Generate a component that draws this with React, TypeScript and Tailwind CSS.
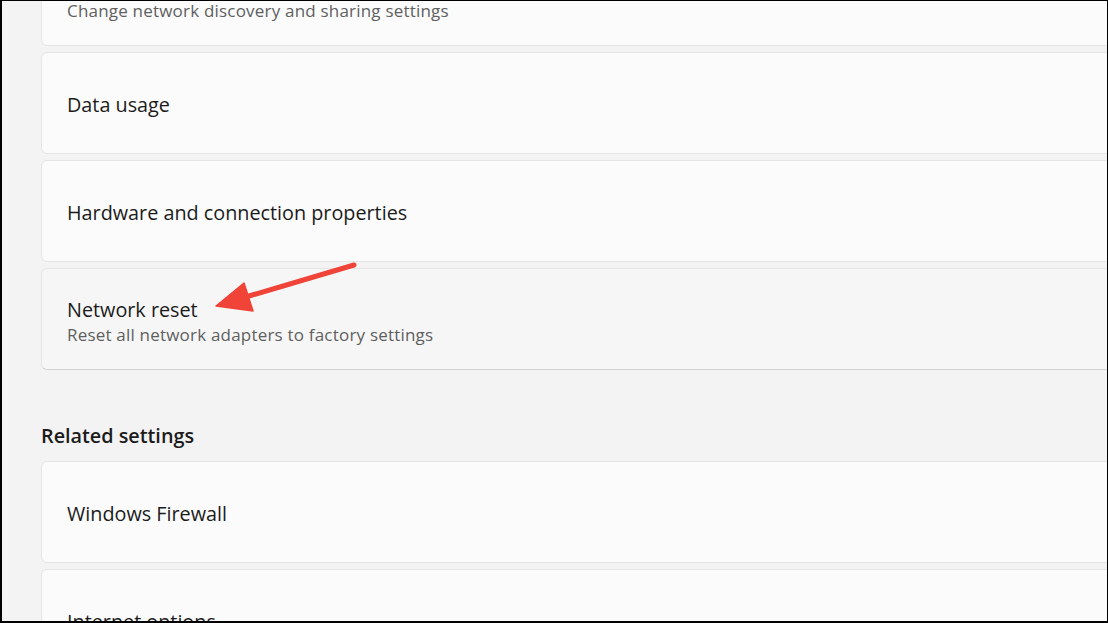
import React from "react";

type Row = { title: string; subtitle?: string; hover?: boolean };

const font = { fontFamily: '"Open Sans", "Noto Sans", sans-serif' };

function SettingCard({ title, subtitle, hover }: Row) {
  return (
    <div
      className={`flex h-[102px] shrink-0 flex-col justify-center rounded-[6px] border border-[#e5e5e5] pl-[25px] pt-[4px] -mr-[20px] ${
        hover ? "bg-[#f6f6f6] border-b-[#d3d3d3]" : "bg-[#fbfbfb]"
      }`}
    >
      <div className="text-[19.8px] leading-[26px] text-[#1b1b1b]">{title}</div>
      {subtitle && (
        <div className="text-[17px] leading-[23px] text-[#5f5f5f] tracking-[0.2px]">{subtitle}</div>
      )}
    </div>
  );
}

export default function App() {
  return (
    <div
      className="relative box-border h-[623px] w-[1108px] overflow-hidden border-b-2 border-l-2 border-r border-t border-black bg-[#f3f3f3]"
      style={font}
    >
      <div className="-mt-[57px] flex flex-col pl-[39px]">
        <div className="flex flex-col gap-[6px]">
          <SettingCard title="Advanced sharing settings" subtitle="Change network discovery and sharing settings" />
          <SettingCard title="Data usage" />
          <SettingCard title="Hardware and connection properties" />
          <SettingCard title="Network reset" subtitle="Reset all network adapters to factory settings" hover />
        </div>

        <h2 className="mt-[52px] mb-[11px] text-[19.8px] font-semibold leading-[28px] text-[#1b1b1b]">
          Related settings
        </h2>

        <div className="flex flex-col gap-[6px]">
          <SettingCard title="Windows Firewall" />
          <SettingCard title="Internet options" />
        </div>
      </div>

      <svg
        className="pointer-events-none absolute left-[198px] top-[254px]"
        width="170"
        height="65"
        viewBox="200 255 170 65"
      >
        <line x1="249" y1="296" x2="354" y2="265" stroke="#ef4437" strokeWidth="5" strokeLinecap="round" />
        <polygon points="216,306 244,283 253,311" fill="#ef4437" stroke="#ef4437" strokeWidth="1.5" strokeLinejoin="round" />
      </svg>
    </div>
  );
}
